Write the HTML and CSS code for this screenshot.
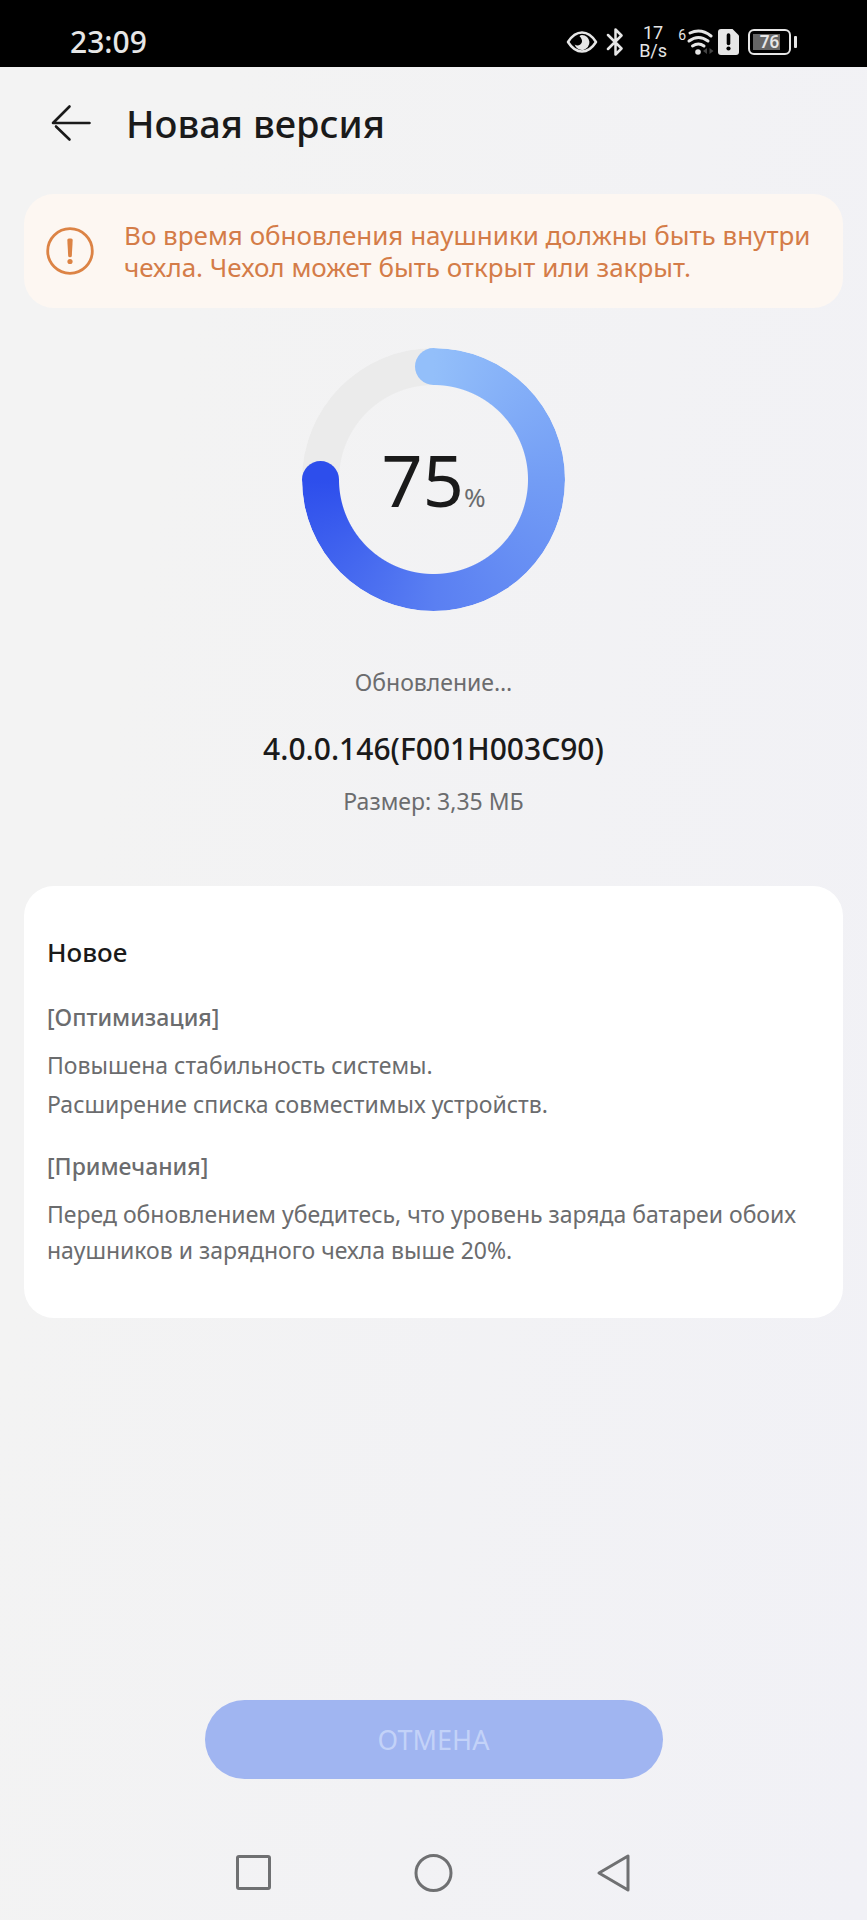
FILE: index.html
```html
<!DOCTYPE html>
<html lang="ru">
<head>
    <meta charset="UTF-8">
    <meta name="viewport" content="width=device-width, initial-scale=1.0">
    <title>Новая версия</title>
    <link rel="stylesheet" href="styles.css">
</head>
<body>
    <div class="statusbar">
        <span class="clock">23:09</span>
        <div class="status-icons">
            <svg class="eye" width="32" height="28" viewBox="0 0 32 28">
                <path d="M2 14Q8 4.500 16 4.500T30 14Q24 23.500 16 23.500T2 14Z" fill="none" stroke="#e6e6e6" stroke-width="2.500" stroke-linejoin="round"/>
                <path d="M16 7a7.500 7.500 0 1 1-7.300 9.500a4.500 4.500 0 0 0 6.800-5.500q-.6-1.800-2-2.800Q14.500 7 16 7Z" fill="#e6e6e6"/>
            </svg>
            <svg class="bluetooth" width="18" height="28" viewBox="0 0 18 28">
                <path d="M2 7L15.500 20.500L9.500 26.500V1.500L15.500 7.500L2 21" fill="none" stroke="#e6e6e6" stroke-width="2.500" stroke-linejoin="round" stroke-linecap="round"/>
            </svg>
            <div class="speed">
                <span>17</span>
                <span>B/s</span>
            </div>
            <div class="wifi">
                <span class="wifi-gen">6</span>
                <svg width="28" height="28" viewBox="0 0 28 28">
                    <g fill="none" stroke="#e6e6e6" stroke-width="3" stroke-linecap="round">
                        <path d="M4 5Q15 0 25 8"/>
                        <path d="M3 13Q12.500 6 22 13"/>
                        <path d="M6.500 18Q12.500 14 18 18"/>
                    </g>
                    <circle cx="12" cy="24" r="2.800" fill="#e6e6e6"/>
                    <path d="M17 23l4-3v6zM27.500 23l-4-3v6z" fill="#444"/>
                </svg>
            </div>
            <svg class="sim" width="22" height="26" viewBox="0 0 22 26">
                <path d="M3 0h11.500L21 6.500V23a3 3 0 0 1-3 3H3a3 3 0 0 1-3-3V3a3 3 0 0 1 3-3Z" fill="#e6e6e6"/>
                <path d="M10.500 6v8.500" stroke="#000" stroke-width="3.600" stroke-linecap="round"/>
                <circle cx="10.500" cy="19.500" r="2.100" fill="#000"/>
            </svg>
            <div class="battery">
                <div class="battery-body"><span>76</span></div>
                <div class="battery-tip"></div>
            </div>
        </div>
    </div>

    <header class="header">
        <button class="back" type="button" aria-label="Назад">
            <svg width="40" height="38" viewBox="0 0 40 38">
                <path d="M38.500 19H2L18.500 2.500M5 22.500L18.500 35.500" fill="none" stroke="#1a1a1a" stroke-width="2.600" stroke-linecap="round" stroke-linejoin="round"/>
            </svg>
        </button>
        <h1>Новая версия</h1>
    </header>

    <main class="content">
        <div class="warning">
            <svg width="48" height="48" viewBox="0 0 48 48">
                <circle cx="24" cy="24" r="22.300" fill="none" stroke="#dc8345" stroke-width="2.800"/>
                <path d="M21.300 13q0-1.600 1.600-1.600h2.200q1.600 0 1.600 1.600L25.800 29q-.1 1.300-1.800 1.300t-1.800-1.300Z" fill="#dc8345"/>
                <circle cx="24" cy="34.500" r="2.600" fill="#dc8345"/>
            </svg>
            <p>Во время обновления наушники должны быть внутри чехла. Чехол может быть открыт или закрыт.</p>
        </div>

        <div class="progress">
            <div class="ring"></div>
            <div class="cap cap-start"></div>
            <div class="cap cap-end"></div>
            <div class="value">75<span>%</span></div>
        </div>

        <p class="state">Обновление…</p>
        <h2 class="version">4.0.0.146(F001H003C90)</h2>
        <p class="size">Размер: 3,35 МБ</p>

        <section class="card">
            <h2>Новое</h2>
            <h3>[Оптимизация]</h3>
            <ul>
                <li>Повышена стабильность системы.</li>
                <li>Расширение списка совместимых устройств.</li>
            </ul>
            <h3>[Примечания]</h3>
            <p>Перед обновлением убедитесь, что уровень заряда батареи обоих наушников и зарядного чехла выше 20%.</p>
        </section>
    </main>

    <button class="cancel" type="button" disabled>ОТМЕНА</button>

    <nav class="navbar">
        <button type="button" aria-label="Недавние">
            <svg width="40" height="40" viewBox="0 0 40 40">
                <rect x="3.500" y="3.500" width="32" height="32" rx="1.500" fill="none" stroke="#6f7072" stroke-width="3"/>
            </svg>
        </button>
        <button type="button" aria-label="Домой">
            <svg width="40" height="40" viewBox="0 0 40 40">
                <circle cx="19.500" cy="20" r="17.500" fill="none" stroke="#6f7072" stroke-width="3"/>
            </svg>
        </button>
        <button type="button" aria-label="Назад">
            <svg width="40" height="40" viewBox="0 0 40 40">
                <path d="M5 20L34 3V37Z" fill="none" stroke="#6f7072" stroke-width="3" stroke-linejoin="round"/>
            </svg>
        </button>
    </nav>
</body>
</html>
```
FILE: styles.css
```css
* {
    box-sizing: border-box;
}
body {
    display: flex;
    flex-direction: column;
    min-height: 100vh;
    margin: 0;
    font-family: "Noto Sans", "Open Sans", sans-serif;
    color: #1a1a1a;
    background: linear-gradient(100deg, #f3f3f3 20%, #f1f1f6);
}
h1, h2, h3, p, ul {
    margin: 0;
    padding: 0;
    list-style: none;
}
button {
    padding: 0;
    border: none;
    background: none;
    font-family: inherit;
}
svg {
    display: block;
}

/* status bar */
.statusbar {
    display: flex;
    justify-content: space-between;
    align-items: center;
    height: 67px;
    padding: 17px 70px 0;
    background-color: #000;
    color: #e6e6e6;
}
.clock {
    font-size: 30px;
    font-weight: 500;
    line-height: 36px;
}
.status-icons {
    display: flex;
    align-items: center;
}
.eye {
    margin-right: 8px;
}
.bluetooth {
    margin-right: 14px;
}
.speed {
    display: flex;
    flex-direction: column;
    width: 30px;
    margin-right: 10px;
    font-family: Roboto, sans-serif;
    font-size: 18px;
    line-height: 18px;
    text-align: center;
}
.wifi {
    display: flex;
    margin-right: 4px;
}
.wifi-gen {
    font-family: Roboto, sans-serif;
    font-size: 14px;
    line-height: 14px;
}
.sim {
    margin-right: 8px;
}
.battery {
    display: flex;
    align-items: center;
    gap: 3px;
}
.battery-body {
    width: 43px;
    height: 26px;
    padding: 2px;
    border: 2px solid #e6e6e6;
    border-radius: 6px;
    font-size: 17px;
    font-weight: 600;
    line-height: 18px;
    text-align: center;
    background: linear-gradient(#666, #666) 3px 50% / 27px 16px no-repeat;
}
.battery-tip {
    width: 3px;
    height: 12px;
    border-radius: 1px;
    background-color: #e6e6e6;
}

/* header */
.header {
    display: flex;
    align-items: center;
    gap: 35px;
    height: 113px;
    padding: 0 51px 2px;
}
h1 {
    font-size: 38px;
    font-weight: 500;
    line-height: 48px;
}

.content {
    padding: 14px 24px 0;
}
.warning {
    display: flex;
    align-items: center;
    gap: 30px;
    min-height: 114px;
    padding: 0 22px;
    border-radius: 30px;
    background-color: #fdf7f2;
    color: #d47c48;
    font-size: 26px;
    line-height: 32px;
}
.warning svg {
    flex: none;
}

/* progress ring */
.progress {
    position: relative;
    display: flex;
    align-items: center;
    justify-content: center;
    width: 263px;
    height: 263px;
    margin: 40px auto 0;
}
.ring {
    position: absolute;
    inset: 0;
    border-radius: 50%;
    background: conic-gradient(#93bffa, #739df5 90deg, #5a7ff2 180deg, #2d4eec 270deg, #ebebeb 270deg);
    -webkit-mask: radial-gradient(circle, transparent 94px, #000 95px);
    mask: radial-gradient(circle, transparent 94px, #000 95px);
}
.cap {
    position: absolute;
    width: 37px;
    height: 37px;
    border-radius: 50%;
}
.cap-start {
    top: 0;
    left: 113px;
    background: linear-gradient(90deg, #93bffa 50%, transparent 50%);
}
.cap-end {
    top: 113px;
    left: 0;
    background: linear-gradient(#2d4eec 50%, transparent 50%);
}
.value {
    padding-top: 16px;
    font-size: 72px;
    line-height: 84px;
}
.value span {
    color: #6b6c6e;
    font-size: 26px;
}

.state,
.size {
    color: #6b6c6e;
    font-size: 23px;
    line-height: 32px;
    text-align: center;
}
.state {
    margin-top: 55px;
}
.version {
    margin: 31px 0 16px;
    font-size: 30px;
    font-weight: 500;
    line-height: 40px;
    text-align: center;
}

/* release notes */
.card {
    margin-top: 69px;
    padding: 48px 23px 50px;
    border-radius: 30px;
    background-color: #fff;
    color: #6b6c6e;
    font-size: 23px;
    line-height: 36px;
}
.card h2 {
    margin-bottom: 29px;
    color: #1a1a1a;
    font-size: 26px;
    font-weight: 500;
}
.card h3 {
    margin-bottom: 12px;
    font-size: 23px;
    font-weight: 500;
}
.card li {
    margin-bottom: 3px;
}
.card ul {
    margin-bottom: 26px;
}

.cancel {
    width: 458px;
    max-width: 80%;
    height: 79px;
    margin: auto auto 0;
    border-radius: 40px;
    background-color: #a0b5f1;
    color: #c3d2f8;
    font-size: 27px;
}

/* system navigation */
.navbar {
    display: flex;
    justify-content: center;
    gap: 140px;
    padding: 74px 0 27px;
}
```
